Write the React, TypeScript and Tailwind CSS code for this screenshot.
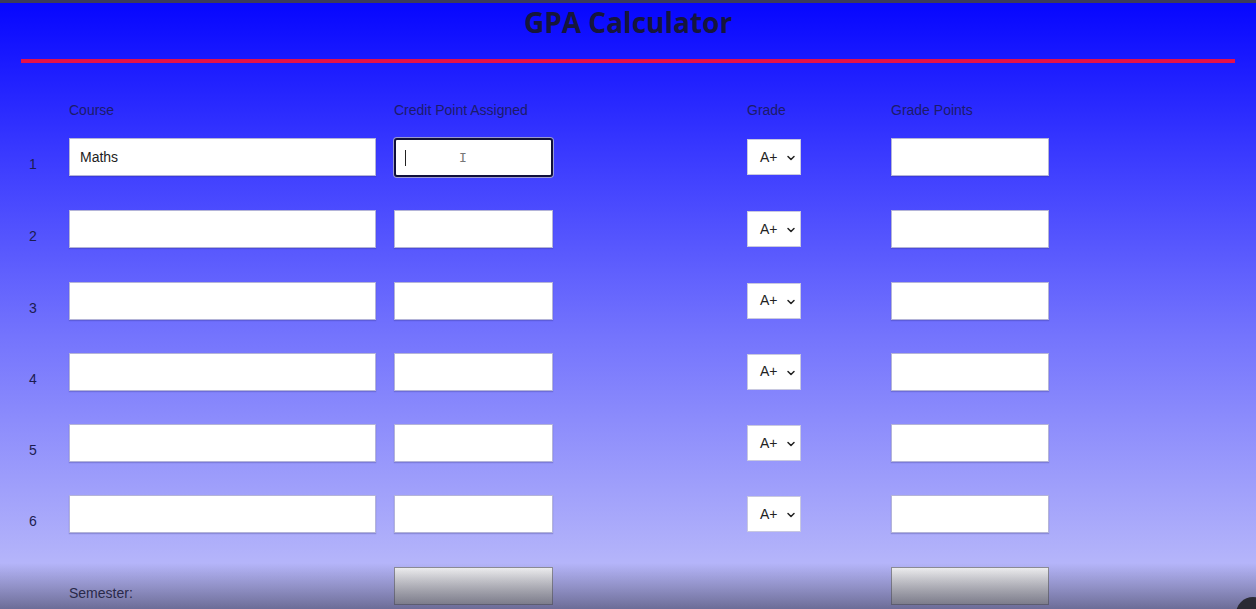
import { ChevronDown } from "lucide-react";

const rows = [1, 2, 3, 4, 5, 6];

const inputCls =
    "h-[38px] bg-white border border-[#b4b4d8] shadow-[0_1px_1px_rgba(40,40,120,0.25)] px-[10px] text-[14px] text-[#222] outline-none";

const GradeSelect = () => (
    <div className="relative w-[54px] h-[36px] mt-[1px] bg-white border border-[#c8c8e0] flex items-center pl-[12px] text-[14px] text-[#222]">
        <span>A+</span>
        <ChevronDown className="absolute right-[3px] top-[12px] w-[12px] h-[12px]" strokeWidth={3} />
    </div>
);

const App = () => {
    return (
        <div
            className="relative w-full h-[609px] overflow-hidden border-t-[3px] border-[#3c3c5c] bg-[linear-gradient(to_bottom,#0606ff_0%,#3a3aff_25%,#7474fd_55%,#b4b4fa_92%,#c0c0fa_100%)]"
            style={{ fontFamily: "'Liberation Sans', Arial, sans-serif" }}
        >
            {/* TOP */}
            <div className="pt-[1px] text-center">
                <h1
                    className="text-[28px] leading-[36px] font-bold text-[#16163c]"
                    style={{ fontFamily: "'Open Sans', sans-serif" }}
                >
                    GPA Calculator
                </h1>
            </div>
            <div className="mx-[21px] mt-[19px] h-[4px] bg-[#e6104a]" />

            {/* HEADERS */}
            <div className="flex mt-[39px] text-[14px] text-[#1c1c6a] leading-[16px]">
                <div className="w-[69px]" />
                <div className="w-[325px]">Course</div>
                <div className="w-[353px]">Credit Point Assigned</div>
                <div className="w-[144px]">Grade</div>
                <div>Grade Points</div>
            </div>

            {/* ROWS */}
            <div className="flex flex-col gap-[33.3px] mt-[20px]">
                {rows.map((n) => (
                    <div key={n} className="flex items-start">
                        <div className="w-[69px] pl-[29px] pt-[18px] text-[14px] leading-[16px] text-[#1c1c50]">{n}</div>
                        <input
                            className={`${inputCls} w-[307px]`}
                            defaultValue={n === 1 ? "Maths" : ""}
                        />
                        <div className="w-[18px]" />
                        {n === 1 ? (
                            <div className="relative w-[159px] h-[39px] bg-white border-2 border-[#10103a] rounded-[3px] shadow-[0_0_0_1px_#9a9ad0]">
                                <div className="absolute left-[9px] top-[10px] w-[1px] h-[16px] bg-[#222]" />
                                <span className="absolute left-[63px] top-[11px] text-[13px] leading-[14px] text-[#777]" style={{ fontFamily: "'DejaVu Sans Mono', monospace" }}>I</span>
                            </div>
                        ) : (
                            <input className={`${inputCls} w-[159px]`} />
                        )}
                        <div className="w-[194px]" />
                        <GradeSelect />
                        <div className="w-[90px]" />
                        <input className={`${inputCls} w-[158px]`} />
                    </div>
                ))}

                {/* SEMESTER */}
                <div className="flex items-start">
                    <div className="w-[69px]" />
                    <div className="w-[325px] pt-[18px] text-[14px] leading-[16px] text-[#2a2a4a]">Semester:</div>
                    <div className="w-[159px] h-[38px] border border-[#909098] bg-[linear-gradient(to_bottom,#f8f8f8,#cfcfcf)]" />
                    <div className="w-[338px]" />
                    <div className="w-[158px] h-[38px] border border-[#909098] bg-[linear-gradient(to_bottom,#f8f8f8,#cfcfcf)]" />
                </div>
            </div>

            {/* video overlay shade */}
            <div className="pointer-events-none absolute left-0 right-0 bottom-0 h-[46px] bg-[linear-gradient(to_bottom,rgba(40,40,70,0),rgba(40,40,70,0.55))]" />
            <div className="absolute right-[-14px] bottom-[-22px] w-[34px] h-[34px] rounded-full bg-[#2a2a34]" />
        </div>
    );
};

export default App;
